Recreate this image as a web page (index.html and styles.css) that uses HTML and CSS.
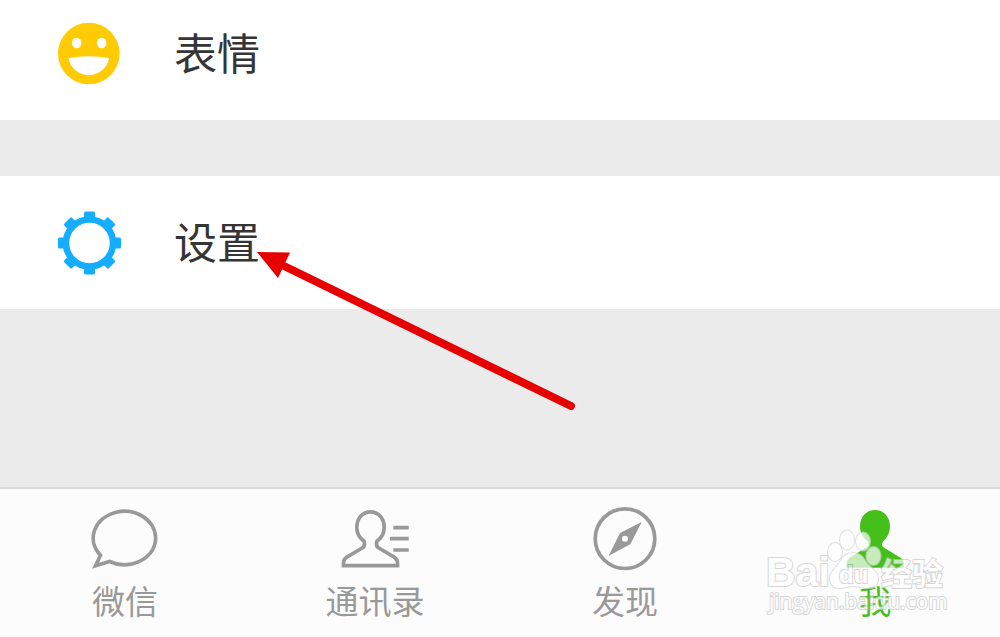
FILE: index.html
```html
<!DOCTYPE html>
<html lang="zh-CN">
<head>
    <meta charset="UTF-8">
    <meta name="viewport" content="width=device-width, initial-scale=1">
    <title>我</title>
    <link rel="stylesheet" href="styles.css">
</head>
<body>
    <main class="menu">
        <a href="#" class="menu-row menu-row-first">
            <svg class="menu-icon" viewBox="0 0 65 65" aria-hidden="true">
                <circle cx="31.8" cy="32.5" r="30.8" fill="#ffcb05"/>
                <ellipse cx="19.700" cy="22" rx="4.7" ry="5.2" fill="#fff"/>
                <ellipse cx="44.700" cy="22" rx="4.7" ry="5.2" fill="#fff"/>
                <path d="M11.500 37Q32 33.500 52 37C50.500 47 42 54 31.800 54S13 47 11.500 37z" fill="#fff"/>
            </svg>
            <span class="menu-label">表情</span>
        </a>
        <a href="#" class="menu-row">
            <svg class="menu-icon" viewBox="0 0 65 65" aria-hidden="true">
                <circle cx="32.5" cy="33" r="23.5" fill="none" stroke="#14adff" stroke-width="6.5"/>
                <g fill="#14adff">
                    <rect id="tooth" x="27" y="1.5" width="11" height="8" rx="1.5"/>
                    <use href="#tooth" transform="rotate(45 32.5 33)"/>
                    <use href="#tooth" transform="rotate(90 32.5 33)"/>
                    <use href="#tooth" transform="rotate(135 32.5 33)"/>
                    <use href="#tooth" transform="rotate(180 32.5 33)"/>
                    <use href="#tooth" transform="rotate(225 32.5 33)"/>
                    <use href="#tooth" transform="rotate(270 32.5 33)"/>
                    <use href="#tooth" transform="rotate(315 32.5 33)"/>
                </g>
            </svg>
            <span class="menu-label">设置</span>
            <svg class="arrow" viewBox="0 0 320 162" aria-hidden="true">
                <path d="M25 14L314 155" fill="none" stroke="#e60000" stroke-width="8" stroke-linecap="round"/>
                <path d="M0 1L33 1.5L21 27z" fill="#e60000"/>
            </svg>
        </a>
    </main>

    <nav class="tab-bar">
        <a href="#" class="tab">
            <svg class="tab-icon" viewBox="0 0 72 68" aria-hidden="true">
                <path d="M11.5 50.2A31.2 26.7 0 1 1 20.500 56.500L6.500 60.7z" fill="none" stroke="#999" stroke-width="3.7"/>
            </svg>
            <span>微信</span>
        </a>
        <a href="#" class="tab">
            <svg class="tab-icon" viewBox="0 0 72 68" aria-hidden="true">
                <g fill="none" stroke="#999" stroke-width="3.7">
                    <path d="M4.5 60.7V57.500Q4.500 54.500 8 52L24 42.500Q26.500 40.500 25 36C20.500 33 17.800 27.500 17.800 22.500C17.800 13 24 6.800 31.500 6.800S45.200 13 45.200 22.500C45.200 27.500 42.500 33 38 36Q36.500 40.500 39 42.500L55 52Q58.500 54.500 58.500 57.500V60.700z"/>
                    <path d="M54.3 22.7H69.7M51 33.7H69.7M54.3 45H69.7"/>
                </g>
            </svg>
            <span>通讯录</span>
        </a>
        <a href="#" class="tab">
            <svg class="tab-icon" viewBox="0 0 72 68" aria-hidden="true">
                <circle cx="36" cy="33.7" r="29.8" fill="none" stroke="#999" stroke-width="3.7"/>
                <path d="M52.7 17L31 28L19.5 51L41.5 39z" fill="#999"/>
                <circle cx="36" cy="33.7" r="3" fill="#fcfcfc"/>
            </svg>
            <span>发现</span>
        </a>
        <a href="#" class="tab tab-active">
            <svg class="tab-icon" viewBox="0 0 72 68" aria-hidden="true">
                <path d="M7.5 62.7V58Q8 54.5 11 52.5L28 42Q30.5 40 29 36.5C24 33 21 27.5 21 21.5C21 11 28 5 36 5S51 11 51 21.5C51 27.5 48 33 44 36.5Q42 39.5 44 42L61 52.5Q64.5 54.5 64.7 58V62.7z" fill="#45c01a"/>
            </svg>
            <span>我</span>
        </a>

        <svg class="watermark" viewBox="0 0 190 95" aria-hidden="true">
            <g class="watermark-shape">
                <ellipse cx="75" cy="27" rx="7" ry="9"/>
                <ellipse cx="87" cy="15" rx="7" ry="9.5"/>
                <ellipse cx="103" cy="16.5" rx="7" ry="9"/>
                <ellipse cx="113.5" cy="31" rx="7" ry="9"/>
                <path d="M93 28C100 28 103 32 106 37C110 43 118 46 118 54C118 60 114 63 108 63C102 63 98 61 93 61S84 63 79 63C73 63 70 59 70 53C70 46 77 43 80 37C83 32 86 28 93 28z"/>
            </g>
            <text class="watermark-brand" x="6" y="61">Bai</text>
            <text class="watermark-du" x="79" y="58">du</text>
            <text class="watermark-cn" x="121" y="60">经验</text>
            <text class="watermark-url" x="9" y="84">jingyan.baidu.com</text>
        </svg>
    </nav>
</body>
</html>
```
FILE: styles.css
```css
body {
    font-family: "Noto Sans CJK SC", sans-serif;
    background-color: #ebebeb;
    color: #353535;
    margin: 0;
    min-height: 100vh;
    display: flex;
    flex-direction: column;
}

a {
    color: inherit;
    text-decoration: none;
}

.menu {
    flex: 1;
    display: flex;
    flex-direction: column;
    gap: 56px;
}

.menu-row {
    position: relative;
    display: flex;
    align-items: flex-start;
    gap: 52px;
    padding: 34px 57px;
    background-color: white;
}

.menu-row-first {
    padding-top: 21px;
}

.menu-icon {
    width: 65px;
    height: 65px;
}

.menu-label {
    font-size: 43px;
    line-height: 61px;
}

.arrow {
    position: absolute;
    left: 257px;
    top: 75px;
    width: 320px;
    height: 162px;
}

.tab-bar {
    position: relative;
    display: flex;
    background-color: #fcfcfc;
    border-top: 2px solid #d9d9d9;
}

.tab {
    flex: 1;
    display: flex;
    flex-direction: column;
    align-items: center;
    padding: 16px 0 10px;
    color: #999;
    font-size: 33px;
    line-height: 54px;
}

.tab-icon {
    width: 72px;
    height: 68px;
}

.tab-active {
    color: #45c01a;
}

/* watermark over the last tab */
.watermark {
    position: absolute;
    right: 50px;
    bottom: 17px;
    width: 190px;
    height: 95px;
    pointer-events: none;
    opacity: 0.7;
    fill: white;
    stroke: #c8c8c8;
    stroke-width: 2px;
    paint-order: stroke;
}

.watermark-shape {
    stroke: #d4d4d4;
}

.watermark-brand {
    font: bold 41px "Liberation Sans", sans-serif;
}

.watermark-du {
    font: bold 24px "Liberation Sans", sans-serif;
}

.watermark-cn {
    font: bold 31px "Noto Sans CJK SC", sans-serif;
}

.watermark-url {
    font: 21px "Open Sans", sans-serif;
}
```
